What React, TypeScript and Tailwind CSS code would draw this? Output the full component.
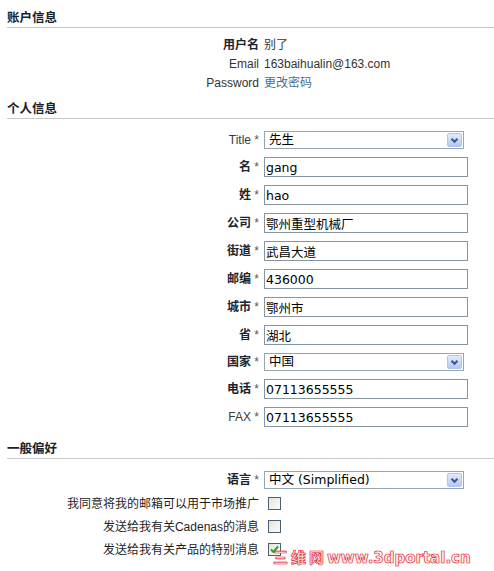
import React from "react";

const SectionHeader = ({ title, className = "" }: { title: string; className?: string }) => (
  <div className={`h-[19px] border-b border-[#c9c9c9] text-[12.5px] leading-[18px] font-bold text-[#16222e] ${className}`}>
    {title}
  </div>
);

const Label = ({ text, cjk = true }: { text: string; cjk?: boolean }) => (
  <div className="w-[252px] shrink-0 text-right text-[12px] leading-[14px]">
    <span className={cjk ? "font-bold text-[#1a2530]" : "text-[#3a3a3a]"}>{text}</span>
    <span className="text-[#555]"> *</span>
  </div>
);

const TextField = ({ label, value, cjk = true }: { label: string; value: string; cjk?: boolean }) => (
  <div className="flex items-center h-[20px]">
    <Label text={label} cjk={cjk} />
    <input
      readOnly
      defaultValue={value}
      className="ml-[5px] w-[204px] h-[20px] border border-[#8596a2] bg-white pl-[1px] font-['DejaVu_Sans','Noto_Sans_CJK_SC',sans-serif] text-[12.5px] text-black outline-none"
    />
  </div>
);

const SelectField = ({ label, value, cjk = true }: { label: string; value: string; cjk?: boolean }) => (
  <div className="flex items-center h-[18px]">
    <Label text={label} cjk={cjk} />
    <div className="ml-[5px] w-[200px] h-[18px] border border-[#97a7b2] bg-white flex items-center justify-between pl-[4px] pr-[1px]">
      <span className="font-['DejaVu_Sans','Noto_Sans_CJK_SC',sans-serif] text-[12.5px] leading-[16px] text-black">{value}</span>
      <span className="w-[15px] h-[14px] rounded-[2px] border border-[#b4c4e8] bg-gradient-to-b from-[#e2eafc] to-[#b5c8f3] flex items-center justify-center">
        <svg width="9" height="7" viewBox="0 0 9 7">
          <path d="M1.5 1.8 L4.5 4.8 L7.5 1.8" fill="none" stroke="#3f5583" strokeWidth="2" />
        </svg>
      </span>
    </div>
  </div>
);

const CheckRow = ({ label, checked = false }: { label: string; checked?: boolean }) => (
  <div className="flex items-center h-[23px]">
    <div className="w-[252px] shrink-0 text-right text-[12px] text-[#1e1e1e]">{label}</div>
    <span className="ml-[9px] w-[13px] h-[13px] border border-[#4b6070] bg-gradient-to-br from-[#e4e4de] to-[#fbfbf9] flex items-center justify-center">
      {checked && (
        <svg width="9" height="9" viewBox="0 0 9 9">
          <path d="M1 4.5 L3.5 7 L8 1.5" fill="none" stroke="#27a527" strokeWidth="2" />
        </svg>
      )}
    </span>
  </div>
);

const InfoRow = ({ label, children, bold = false }: { label: string; children: React.ReactNode; bold?: boolean }) => (
  <div className="flex items-center h-[19px] text-[12px]">
    <div className={`w-[252px] shrink-0 text-right ${bold ? "font-bold text-[#1a2530]" : "text-[#333]"}`}>{label}</div>
    <div className="ml-[5px] text-[#333]">{children}</div>
  </div>
);

export default function App() {
  return (
    <div className="relative w-[494px] h-[571px] overflow-hidden bg-white pt-[9px] pl-[7px] font-['Liberation_Sans','Noto_Sans_CJK_SC',sans-serif]">
      <SectionHeader title="账户信息" />
      <div className="pt-[7px]">
        <InfoRow label="用户名" bold>别了</InfoRow>
        <InfoRow label="Email">163baihualin@163.com</InfoRow>
        <InfoRow label="Password">
          <span className="text-[#4d6d8d]">更改密码</span>
        </InfoRow>
      </div>

      <SectionHeader title="个人信息" className="mt-[8px]" />
      <div className="pt-[12px] flex flex-col gap-[8px]">
        <SelectField label="Title" value="先生" cjk={false} />
        <TextField label="名" value="gang" />
        <TextField label="姓" value="hao" />
        <TextField label="公司" value="鄂州重型机械厂" />
        <TextField label="街道" value="武昌大道" />
        <TextField label="邮编" value="436000" />
        <TextField label="城市" value="鄂州市" />
        <TextField label="省" value="湖北" />
        <SelectField label="国家" value="中国" />
        <TextField label="电话" value="07113655555" />
        <TextField label="FAX" value="07113655555" cjk={false} />
      </div>

      <SectionHeader title="一般偏好" className="mt-[13px]" />
      <div className="pt-[12px]">
        <SelectField label="语言" value="中文 (Simplified)" />
      </div>
      <div className="mt-[3px]">
        <CheckRow label="我同意将我的邮箱可以用于市场推广" />
        <CheckRow label="发送给我有关Cadenas的消息" />
        <CheckRow label="发送给我有关产品的特别消息" checked />
      </div>

      {/* watermark */}
      <div className="absolute left-[273px] top-[550px] whitespace-nowrap font-['DejaVu_Sans','Noto_Sans_CJK_SC',sans-serif] font-bold text-[15px] leading-[17px] text-[#fff4f4] [-webkit-text-stroke:0.6px_#e0242e] [text-shadow:0_0_1px_#f06068]">
        <span className="tracking-[3px]">三维网</span>www.3dportal.cn
      </div>
    </div>
  );
}
